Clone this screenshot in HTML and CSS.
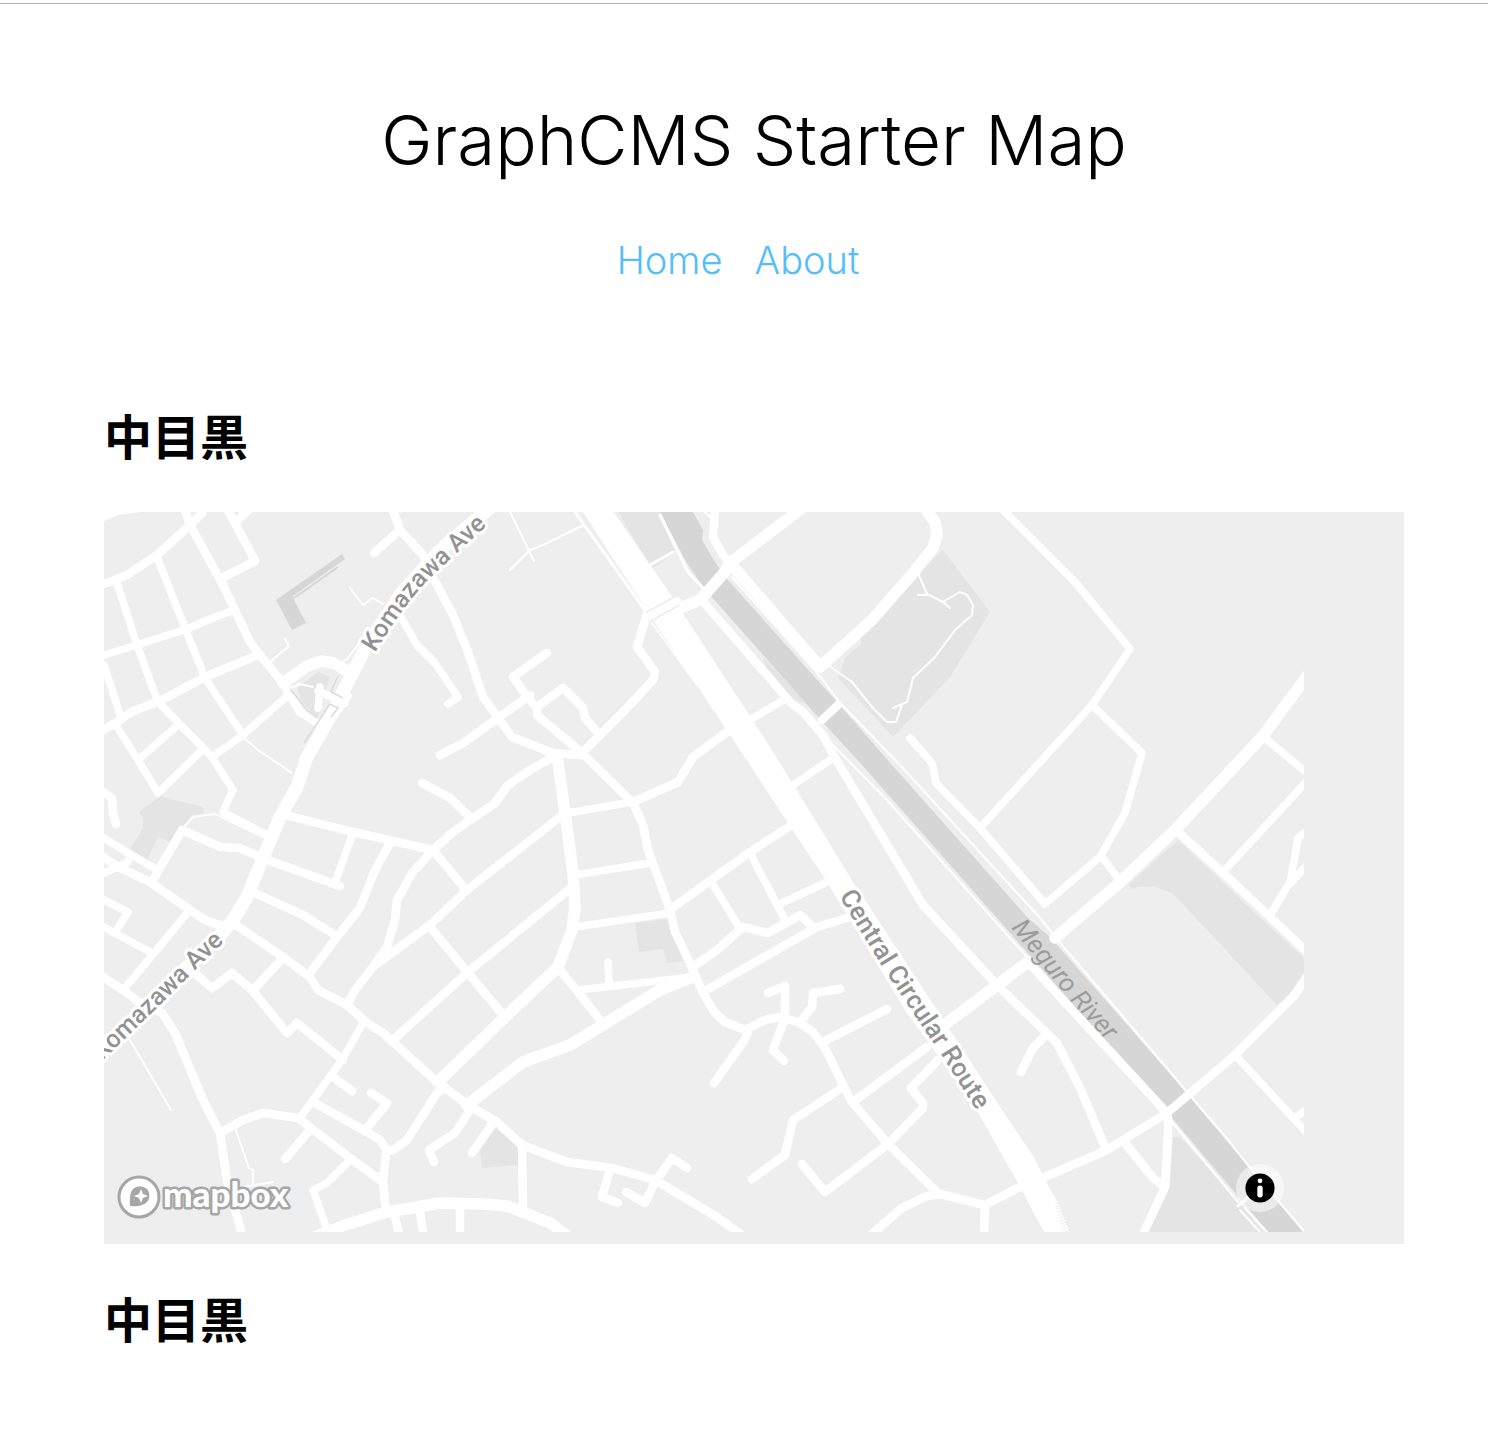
FILE: index.html
```html
<!DOCTYPE html>
<html lang="ja">
<head>
<meta charset="utf-8">
<meta name="viewport" content="width=device-width, initial-scale=1">
<title>GraphCMS Starter Map</title>
<link rel="stylesheet" href="styles.css">
</head>
<body>
<header class="site-header">
  <h1 class="site-title">GraphCMS Starter Map</h1>
  <nav class="site-nav">
    <a class="nav-link" href="#home">Home</a>
    <a class="nav-link" href="#about">About</a>
  </nav>
</header>
<main class="content">
  <h2 class="place-name">中目黒</h2>
  <section class="map" aria-label="Map">
    <svg class="map-canvas" viewBox="104 512 1200 720">
      <defs>
        <path id="komazawa-north" d="M375 653Q403 606 429 579L494 519"/>
        <path id="komazawa-south" d="M102 1061L162 1003L238 928"/>
        <path id="circular" d="M839 896L883 968L944 1059L985 1124"/>
        <path id="meguro" d="M1011 928L1069 999L1118 1054"/>
      </defs>

      <!-- parks -->
      <g class="park">
        <path d="M618 512H660L675 552L653 568L648 562Z"/>
        <path d="M763 657L767 672L795 702L806 703Z"/>
        <path d="M943 550L990 612L950 677L893 737L838 678L845 658L862 643L858 636L913 578Z"/>
        <path d="M1178 840L1128 885L1133 889L1137 887L1153 886L1172 893L1182 903L1277 1005L1290 993L1304 972V958L1270 927Z"/>
        <path d="M1173 1137H1180L1235 1197L1263 1232H1148L1170 1187Z"/>
        <path d="M635 923L668 919L683 961L667 963L663 949L639 952Z"/>
        <path d="M496 1128L518 1148V1165L482 1168L480 1150Z"/>
        <path d="M160 796L202 807L204 813L192 815L170 842L158 837L147 860L130 849L143 828V818L139 812Z"/>
        <path d="M297 688L318 672L330 677L317 718L302 702Z"/>
      </g>

      <!-- river and building -->
      <path class="water" d="M693 512L703 530L702 540L715 562L727 579L837 702L892 765L1028 918L1050 937L1187 1093L1228 1142L1248 1167L1303 1232H1268L1172 1118L1040 967L997 918L862 765L818 717L710 595L703 587L685 560L660 512Z"/>
      <path class="water" d="M276 600L342 554L345 559L293 596L295 602L306 623L292 630Z"/>
      <path class="building" d="M294 598L338 567"/>

      <!-- footpaths -->
      <g class="road path">
        <path d="M243 737L258 750L292 773M350 588L363 605L373 598L383 604M285 639L289 646L270 662"/>
        <path d="M510 512L534 561M510 570L530 550L543 545L582 526M342 662L348 658L360 642"/>
        <path d="M613 513L672 598M705 512L710 517M652 623L697 685"/>
        <path d="M918 573L927 594L943 602L960 592L967 595L973 605L972 615L955 630L935 657L913 678L907 702L893 708"/>
        <path d="M902 705L896 722L887 722L873 708L852 682L828 665M918 595H927M943 602L950 608"/>
        <path d="M732 577L813 668L842 705L900 765L1040 918L1062 945L1143 1040L1187 1092L1228 1140L1248 1165L1304 1231"/>
        <path d="M828 740L887 800L1027 957M1172 1122L1238 1202M1240 1210L1260 1232M1245 1208L1267 1232"/>
        <path d="M183 828L193 817L215 814L263 837M130 1040L171 1110M235 1128L249 1168L253 1170V1183M243 1187L273 1182"/>
        <path d="M290 688L300 684L313 687"/>
      </g>
      <g class="road lane">
        <path d="M575 512L647 613M660 515L688 572L703 588M650 565L673 552M1238 1206L1277 1173"/>
      </g>

      <!-- local streets -->
      <g class="road narrow">
        <path d="M117 727L138 760L158 793L202 750M178 725L138 760M104 665L121 718"/>
        <path d="M157 557L185 628L205 678L243 735M117 583L137 645L158 702L212 757L233 790L223 812L267 835"/>
        <path d="M104 655L137 645L187 629L215 617L232 611M285 698L243 735L212 757"/>
        <path d="M398 612L417 645L435 663L458 697L448 704"/>
        <path d="M753 718L787 698M793 785L833 758"/>
        <path d="M1003 510L1075 582L1130 649L1092 705L980 828"/>
        <path d="M910 738L932 763L936 783L980 828L1045 904L1100 857L1125 813L1142 753L1092 705M1102 857L1118 878"/>
        <path d="M1265 738L1308 774M1223 872L1308 780M1270 915L1287 887L1308 864M1290 883L1298 838L1308 830"/>
        <path d="M1237 1057L1295 1120L1308 1134M1295 1118L1308 1108"/>
        <path d="M100 836L157 870M100 875L124 864M130 857L124 868M188 912L125 988M100 898L128 912L118 928M100 925L152 953"/>
        <path d="M568 813L632 802M575 875L650 863M575 927L670 913M578 990L693 977M608 962L609 983"/>
        <path d="M750 853L785 920M782 903L825 883M712 883L739 927"/>
        <path d="M353 833L335 883M363 1023L342 1060L300 1118M350 1160L337 1173L327 1183L313 1190L330 1238"/>
      </g>
      <g class="road street">
        <path d="M228 510L255 561L222 578M235 523L250 508M100 732L117 722L133 711L160 701L205 677L258 655"/>
        <path d="M393 510L400 530L374 553M400 530L423 555L430 572L453 615L468 652L483 697L512 737L553 753L580 755"/>
        <path d="M440 755L463 743L498 718L530 695M547 653L513 677L528 698L537 708V715L582 753L632 802"/>
        <path d="M537 707L563 688L583 708L585 718L598 733M582 753L627 708L653 680L655 672L637 647L647 614"/>
        <path d="M715 512L713 537L723 555L730 563"/>
        <path d="M700 598L758 665L767 675L790 702L803 712L823 735L835 758L923 905L997 985L1057 1043L1080 1088L1105 1147"/>
        <path d="M727 732L693 757L678 782L633 802M822 720L838 705"/>
        <path d="M1178 832L1223 873L1270 917L1308 953M1308 976L1293 997L1235 1055L1167 1113L1123 1140L1107 1150L1045 1177"/>
        <path d="M1028 962L1167 1113M1043 1038L1033 1048L1021 1072M1168 1117V1133L1165 1187L1144 1232M1125 1143L1153 1178L1165 1187"/>
        <path d="M1020 1187L985 1205L940 1194L927 1196L902 1208L872 1234M985 1205L984 1234"/>
        <path d="M938 1193L888 1144L852 1102L843 1085L825 1048L813 1032L798 1022L780 1017L765 1020L745 1030L725 1022L715 1013L703 993"/>
        <path d="M748 1032L744 1041L714 1083M768 993L785 986V1018L773 1050L784 1061M840 989L813 993L812 1007L802 1020"/>
        <path d="M823 1042L887 1009M853 1102L927 1047M843 1087L793 1120L785 1155L752 1179"/>
        <path d="M802 1164L825 1192L888 1144L923 1108V1103L911 1088L938 1060"/>
        <path d="M672 908L700 888L750 852L790 826M693 967L717 950L743 927L768 933L800 915L813 927M703 992L817 927L847 918"/>
        <path d="M285 815L353 832L433 850M422 783L450 798L470 817"/>
        <path d="M553 757L530 770L508 785L495 803L453 832L433 850L412 873L403 890L397 900L395 920L387 947L373 967L355 990L347 1005"/>
        <path d="M565 813L467 890L430 925L400 947L375 965M433 850L466 890M572 887L468 972L393 1040M430 927L468 973L504 1016"/>
        <path d="M633 803L643 825L648 850L670 910L675 932L690 963L703 993M560 970L578 992L600 1020"/>
        <path d="M102 791L112 798L113 813L116 824M153 880L182 830L220 847L240 848L262 858L340 886"/>
        <path d="M390 843L375 870L360 908L337 937L310 973M255 893L303 915L335 935"/>
        <path d="M233 923L283 957L310 977L318 990L347 1005L367 1023L383 1033L437 1082L468 1105L497 1122L522 1145L567 1162L612 1168L655 1180L717 1217L746 1238"/>
        <path d="M100 855L120 868L150 882L190 910L205 920L227 928M100 975L123 990L143 1005L162 1013L175 1033L203 1100L220 1133L227 1180L243 1238"/>
        <path d="M193 972L212 988L232 973L252 990L287 1033L297 1023L343 1060M283 958L253 990"/>
        <path d="M333 1077L352 1091M313 1102L367 1132L380 1140L388 1152M367 1128L387 1103L371 1093"/>
        <path d="M220 1133L243 1120L263 1113L298 1118L350 1158L383 1182M310 1130L285 1159"/>
        <path d="M386 1212L383 1182L386 1152L393 1150L407 1140L437 1093L445 1087"/>
        <path d="M395 1217L400 1238M420 1212L424 1238M460 1207V1238M470 1110L455 1133L429 1150L434 1162M493 1123L472 1153M522 1147L523 1208"/>
        <path d="M610 1170L602 1197L618 1203M626 1192L645 1203L655 1182L672 1158L687 1168"/>
        <path d="M203 512L188 527L157 555L127 575L115 580L100 585M185 510L190 525L222 583L250 642L260 655L283 683L300 712L319 724"/>
      </g>

      <!-- collector roads -->
      <g class="road major">
        <path d="M283 683L307 666L322 661L333 663L350 672M680 608L700 600L724 573"/>
        <path d="M557 755L565 813L573 873L575 907L572 930L558 967L505 1017L438 1082"/>
        <path d="M693 977L660 990L570 1045L523 1062L467 1105"/>
        <path d="M724 573L730 563L802 508M730 563L820 667L872 620L913 573L933 548L937 535L935 522L925 508"/>
        <path d="M1055 938L1117 885L1175 830L1262 737L1277 717L1308 675M947 1023L1028 962"/>
        <path d="M312 1238L345 1225L387 1212L440 1203L483 1204L507 1206L550 1223L570 1238"/>
      </g>
      <path class="corner" d="M104 512V521L118 515L140 512Z"/>

      <!-- Komazawa Ave -->
      <path class="road avenue" d="M490 508L440 550L402 592L367 645L350 678L333 712L307 757L297 787L280 817L262 860L247 897L233 920L223 932L98 1053"/>
      <path class="road narrow" d="M318 708L320 687M318 691L345 703M333 718L348 696"/>
      <path class="edge" d="M290 689L307 710L317 718M338 676L331 692L343 698M304 743L330 704L338 708L331 717"/>

      <!-- Central Circular Route -->
      <path class="highway" d="M583 512L655 623L740 750L827 882L905 1010L975 1107L1018 1183L1044 1232H1062L1054 1197L1033 1156L1000 1107L937 1010L853 882L772 750L682 612L613 512Z"/>
      <path class="ramp" d="M1049 1197L1064 1234"/>
      <path class="bridge" d="M648 617L677 601"/>
      <path class="road street" d="M648 617L677 601"/>

      <g class="label label-road">
        <text class="label-avenue"><textPath href="#komazawa-north">Komazawa Ave</textPath></text>
        <text class="label-avenue"><textPath href="#komazawa-south">Komazawa Ave</textPath></text>
        <text><textPath href="#circular">Central Circular Route</textPath></text>
      </g>
      <text class="label label-water"><textPath href="#meguro">Meguro River</textPath></text>

      <g class="logo">
        <circle class="logo-ring" cx="139" cy="1197" r="20"/>
        <path class="logo-pin" d="M130 1206Q129 1193 133 1189A10 10 0 0 1 147 1189A10 10 0 0 1 147 1202Q143 1207 130 1206Z"/>
        <path class="logo-star" d="M141 1189L143 1194L148 1196L143 1198L141 1203L139 1198L134 1196L139 1194Z"/>
        <text class="logo-text" x="163" y="1207">mapbox</text>
      </g>
    </svg>
    <button class="map-info" type="button" aria-label="Toggle attribution">
      <svg class="info-icon" viewBox="0 0 48 48">
        <circle cx="24" cy="24" r="14.6"/>
        <circle class="info-mark" cx="24" cy="16.8" r="2.4"/>
        <rect class="info-mark" x="21.3" y="21.5" width="5.4" height="12" rx="2.7"/>
      </svg>
    </button>
  </section>
  <h2 class="place-name">中目黒</h2>
</main>
</body>
</html>
```
FILE: styles.css
```css
* {
  box-sizing: border-box;
}

body {
  margin: 0;
  background: #fff;
  color: #000;
  font-family: Inter, "Noto Sans CJK JP", sans-serif;
}

.site-header {
  margin-top: 3px;
  padding: 88px 84px 0 104px;
  border-top: 1px solid #b4b4b4;
  text-align: center;
}

.site-title {
  margin: 0;
  font-size: 69px;
  font-weight: 350;
  line-height: 96px;
}

.site-nav {
  display: flex;
  justify-content: center;
  margin-top: 48px;
}

.nav-link {
  margin-right: 32px;
  color: #54bdfb;
  font-size: 38px;
  font-weight: 350;
  line-height: 48px;
  text-decoration: none;
}

.content {
  padding: 114px 84px 86px 104px;
}

.place-name {
  margin: 0;
  font-family: "Noto Sans CJK JP", sans-serif;
  font-size: 48px;
  font-weight: 700;
  line-height: 72px;
}

.map {
  position: relative;
  margin: 42px 0 37px;
  padding-bottom: 12px;
  background: #eee;
}

.map-canvas {
  display: block;
  width: 1200px;
  max-width: 100%;
  overflow: hidden;
}

.map-info {
  position: absolute;
  left: 1132px;
  bottom: 32px;
  width: 48px;
  height: 48px;
  padding: 0;
  border: 0;
  border-radius: 50%;
  background: rgba(255, 255, 255, 0.5);
}

.info-icon {
  display: block;
}

.info-mark {
  fill: #fff;
}

.park {
  fill: #e4e4e4;
}

.water {
  fill: #d6d6d6;
}

.edge,
.building {
  fill: none;
  stroke: #dcdcdc;
  stroke-width: 1.5;
}

.building {
  stroke: #d6d6d6;
  stroke-width: 2;
}

.road {
  fill: none;
  stroke: #fff;
  stroke-linecap: round;
  stroke-linejoin: round;
}

.corner,
.highway {
  fill: #fff;
}

.path {
  stroke-width: 2;
}

.lane {
  stroke-width: 3;
}

.narrow {
  stroke-width: 7.5;
}

.street {
  stroke-width: 8.5;
}

.major {
  stroke-width: 11.5;
}

.avenue {
  stroke-width: 13;
}

.ramp {
  fill: none;
  stroke: #fff;
  stroke-width: 12;
  stroke-dasharray: 2 1;
}

.bridge {
  fill: none;
  stroke: #e6e6e6;
  stroke-width: 11;
}

.label {
  font-family: Roboto, "Noto Sans", sans-serif;
  font-size: 26px;
}

.label-road {
  fill: #929292;
  font-weight: 500;
  stroke: #fff;
  stroke-width: 6;
  stroke-linejoin: round;
  paint-order: stroke;
}

.label-avenue {
  font-size: 25px;
}

.label-water {
  fill: #9c9c9c;
  font-style: italic;
}

.logo-ring {
  fill: #fff;
  stroke: #a6a6a6;
  stroke-width: 3;
}

.logo-pin {
  fill: #a6a6a6;
}

.logo-star {
  fill: #fff;
}

.logo-text {
  fill: #fff;
  font-family: Lato, sans-serif;
  font-size: 35px;
  font-weight: 900;
  stroke: #a6a6a6;
  stroke-width: 5;
  stroke-linejoin: round;
  paint-order: stroke;
}
```
